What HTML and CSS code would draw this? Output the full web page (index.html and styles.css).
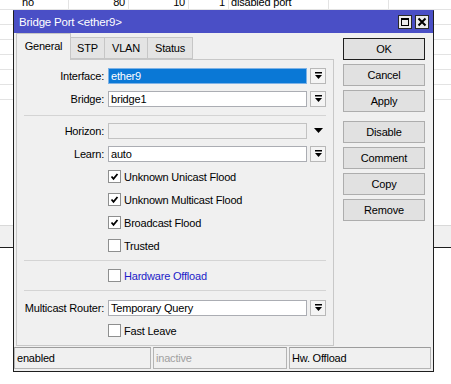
FILE: index.html
```html
<!DOCTYPE html>
<html lang="en">
<head>
    <meta charset="UTF-8">
    <meta name="viewport" content="width=device-width, initial-scale=1.0">
    <title>Bridge Port &lt;ether9&gt;</title>
    <link rel="stylesheet" href="styles.css">
</head>
<body>
    <div class="list">
        <div class="list-row first">
            <span class="cell c1">no</span>
            <span class="cell c2">80</span>
            <span class="cell c3">10</span>
            <span class="cell c4">1</span>
            <span class="cell c5">disabled port</span>
            <span class="cell c6"></span>
            <span class="cell c7"></span>
        </div>
        <div class="list-row"></div>
        <div class="list-row"></div>
        <div class="list-row"></div>
        <div class="list-row"></div>
        <div class="list-row"></div>
        <div class="list-row"></div>
    </div>
    <div class="band"></div>

    <div class="dialog">
        <div class="titlebar">
            <span class="title">Bridge Port &lt;ether9&gt;</span>
            <span class="tb-btns">
                <span class="tb-btn">
                    <svg width="10" height="10" viewBox="0 0 10 10"><rect x="1.5" y="1.5" width="7" height="7" fill="none" stroke="#000"/><rect x="1" y="1" width="8" height="2" fill="#000"/></svg>
                </span>
                <span class="tb-btn">
                    <svg width="10" height="10" viewBox="0 0 10 10"><path d="M1.5 1.5 L8.5 8.5 M8.5 1.5 L1.5 8.5" stroke="#000" stroke-width="2"/></svg>
                </span>
            </span>
        </div>

        <div class="dlg-body">
            <div class="main">
                <div class="tabs">
                    <span class="tab active t-general">General</span>
                    <span class="tab t-stp">STP</span>
                    <span class="tab t-vlan">VLAN</span>
                    <span class="tab t-status">Status</span>
                </div>
                <div class="panel">
                    <div class="row">
                        <span class="lbl">Interface:</span>
                        <span class="field selected">ether9</span>
                        <span class="dd"><svg width="7" height="7" viewBox="0 0 7 7"><rect x="0" y="0" width="7" height="1.5" fill="#000"/><polygon points="0,3 7,3 3.5,7" fill="#000"/></svg></span>
                    </div>
                    <div class="row">
                        <span class="lbl">Bridge:</span>
                        <span class="field">bridge1</span>
                        <span class="dd"><svg width="7" height="7" viewBox="0 0 7 7"><rect x="0" y="0" width="7" height="1.5" fill="#000"/><polygon points="0,3 7,3 3.5,7" fill="#000"/></svg></span>
                    </div>
                    <div class="sep sep-a"></div>
                    <div class="row">
                        <span class="lbl">Horizon:</span>
                        <span class="field disabled"></span>
                        <span class="dd plain"><svg width="9" height="5" viewBox="0 0 9 5"><polygon points="0,0 9,0 4.5,5" fill="#000"/></svg></span>
                    </div>
                    <div class="row">
                        <span class="lbl">Learn:</span>
                        <span class="field">auto</span>
                        <span class="dd"><svg width="7" height="7" viewBox="0 0 7 7"><rect x="0" y="0" width="7" height="1.5" fill="#000"/><polygon points="0,3 7,3 3.5,7" fill="#000"/></svg></span>
                    </div>
                    <div class="row">
                        <span class="lbl"></span>
                        <span class="box"><svg width="11" height="11" viewBox="0 0 11 11"><path d="M2.5 5.5 L4.5 7.8 L8.5 3" fill="none" stroke="#000" stroke-width="1.8"/></svg></span>
                        <span>Unknown Unicast Flood</span>
                    </div>
                    <div class="row">
                        <span class="lbl"></span>
                        <span class="box"><svg width="11" height="11" viewBox="0 0 11 11"><path d="M2.5 5.5 L4.5 7.8 L8.5 3" fill="none" stroke="#000" stroke-width="1.8"/></svg></span>
                        <span>Unknown Multicast Flood</span>
                    </div>
                    <div class="row">
                        <span class="lbl"></span>
                        <span class="box"><svg width="11" height="11" viewBox="0 0 11 11"><path d="M2.5 5.5 L4.5 7.8 L8.5 3" fill="none" stroke="#000" stroke-width="1.8"/></svg></span>
                        <span>Broadcast Flood</span>
                    </div>
                    <div class="row">
                        <span class="lbl"></span>
                        <span class="box"></span>
                        <span>Trusted</span>
                    </div>
                    <div class="sep sep-b"></div>
                    <div class="row">
                        <span class="lbl"></span>
                        <span class="box"></span>
                        <span class="link">Hardware Offload</span>
                    </div>
                    <div class="sep sep-c"></div>
                    <div class="row">
                        <span class="lbl">Multicast Router:</span>
                        <span class="field">Temporary Query</span>
                        <span class="dd"><svg width="7" height="7" viewBox="0 0 7 7"><rect x="0" y="0" width="7" height="1.5" fill="#000"/><polygon points="0,3 7,3 3.5,7" fill="#000"/></svg></span>
                    </div>
                    <div class="row">
                        <span class="lbl"></span>
                        <span class="box"></span>
                        <span>Fast Leave</span>
                    </div>
                </div>
            </div>

            <div class="buttons">
                <span class="btn default">OK</span>
                <span class="btn">Cancel</span>
                <span class="btn">Apply</span>
                <span class="btn group">Disable</span>
                <span class="btn">Comment</span>
                <span class="btn">Copy</span>
                <span class="btn">Remove</span>
            </div>
        </div>

        <div class="statusbar">
            <span class="sf sf1">enabled</span>
            <span class="sf sf2 dim">inactive</span>
            <span class="sf sf3">Hw. Offload</span>
        </div>
    </div>
</body>
</html>
```

FILE: styles.css
```css
* {
    box-sizing: border-box;
}

html, body {
    margin: 0;
    padding: 0;
}

body {
    position: relative;
    width: 451px;
    height: 384px;
    overflow: hidden;
    background-color: #fff;
    font-family: "Liberation Sans", Arial, sans-serif;
    font-size: 11px;
    letter-spacing: -0.2px;
    color: #000;
}

/* list behind the dialog */
.list-row {
    display: flex;
    height: 15px;
    line-height: 14px;
    border-bottom: 1px solid #e3e3e3;
}

.list-row.first {
    margin-top: -5px;
}

.cell {
    border-right: 1px solid #e3e3e3;
    white-space: nowrap;
    overflow: hidden;
}

.c1 { width: 69px; padding-left: 22px; }
.c2 { width: 60px; text-align: right; padding-right: 3px; }
.c3 { width: 60px; text-align: right; padding-right: 3px; }
.c4 { width: 40px; text-align: right; padding-right: 3px; }
.c5 { width: 100px; padding-left: 2px; }
.c6 { width: 60px; }
.c7 { flex: 1; border-right: none; }

.band {
    margin-top: 125px;
    height: 23px;
    background-color: #f0f0f0;
    border-top: 1px solid #d9d9d9;
    border-bottom: 1px solid #1e1e1e;
}

/* dialog window */
.dialog {
    position: absolute;
    left: 13px;
    top: 10px;
    width: 421px;
    height: 362px;
    display: flex;
    flex-direction: column;
    background-color: #f0f0f0;
    border: 1px solid #1e1e1e;
    border-top-color: #4a4fc6;
}

.titlebar {
    display: flex;
    align-items: center;
    justify-content: space-between;
    height: 22px;
    padding: 0 4px 0 5px;
    background-color: #4a4fc6;
    color: #fff;
    font-size: 11.5px;
}

.tb-btns {
    display: flex;
    gap: 3px;
}

.tb-btn {
    display: flex;
    align-items: center;
    justify-content: center;
    width: 14px;
    height: 14px;
    background-color: #ececec;
    border: 1px solid #2a2a2a;
}

.dlg-body {
    display: flex;
    height: 313px;
    padding-left: 2px;
}

.main {
    width: 318px;
}

.tabs {
    display: flex;
    align-items: flex-end;
    height: 26px;
}

.tab {
    height: 22px;
    margin-left: -1px;
    line-height: 20px;
    text-align: center;
    background-color: #e4e4e4;
    border: 1px solid #c6c6c6;
}

.tab.active {
    position: relative;
    z-index: 1;
    height: 27px;
    margin-left: 0;
    margin-bottom: -1px;
    line-height: 24px;
    background-color: #f0f0f0;
    border-bottom: none;
}

.t-general { width: 55px; }
.t-stp { width: 35px; }
.t-vlan { width: 44px; }
.t-status { width: 46px; }

.panel {
    height: 287px;
    padding-top: 4px;
    border: 1px solid #c8c8c8;
}

.row {
    display: flex;
    align-items: center;
    height: 23px;
    white-space: nowrap;
}

.lbl {
    width: 87px;
    margin-right: 4px;
    text-align: right;
}

.field {
    width: 199px;
    height: 16px;
    padding-left: 2px;
    line-height: 14px;
    background-color: #fff;
    border: 1px solid #abadb3;
}

.field.selected {
    background-color: #0a78d6;
    border-color: #7db2e6;
    color: #fff;
}

.field.disabled {
    background-color: #f0f0f0;
    border-color: #c2c2c2;
}

.dd {
    display: flex;
    align-items: center;
    justify-content: center;
    width: 16px;
    height: 16px;
    margin-left: 3px;
    background-color: #f4f4f4;
    border: 1px solid #b8b8b8;
}

.dd.plain {
    background: none;
    border: none;
}

.box {
    display: flex;
    align-items: center;
    justify-content: center;
    width: 13px;
    height: 13px;
    margin-right: 3px;
    background-color: #fff;
    border: 1px solid #8e8f8f;
}

.link {
    color: #1c1cc8;
}

.sep {
    height: 1px;
    margin: 3px 7px 3px 7px;
    background-color: #d4d4d4;
}

.sep-a { margin-top: 5px; }
.sep-c { margin-bottom: 5px; }

.buttons {
    display: flex;
    flex-direction: column;
    gap: 4px;
    width: 82px;
    margin-left: 9px;
    padding-top: 5px;
}

.btn {
    height: 22px;
    line-height: 20px;
    text-align: center;
    background-color: #e1e1e1;
    border: 1px solid #adadad;
}

.btn.default {
    border-color: #1e1e1e;
}

.btn.group {
    margin-top: 5px;
}

.statusbar {
    display: flex;
    gap: 2px;
    height: 22px;
    margin-top: 1px;
}

.sf {
    height: 22px;
    padding-left: 2px;
    line-height: 20px;
    border: 1px solid #b4b4b4;
    border-top-color: #9c9c9c;
}

.sf1 { width: 137px; }
.sf2 { width: 134px; }
.sf3 { width: 142px; }

.dim {
    color: #a0a0a0;
}
```
